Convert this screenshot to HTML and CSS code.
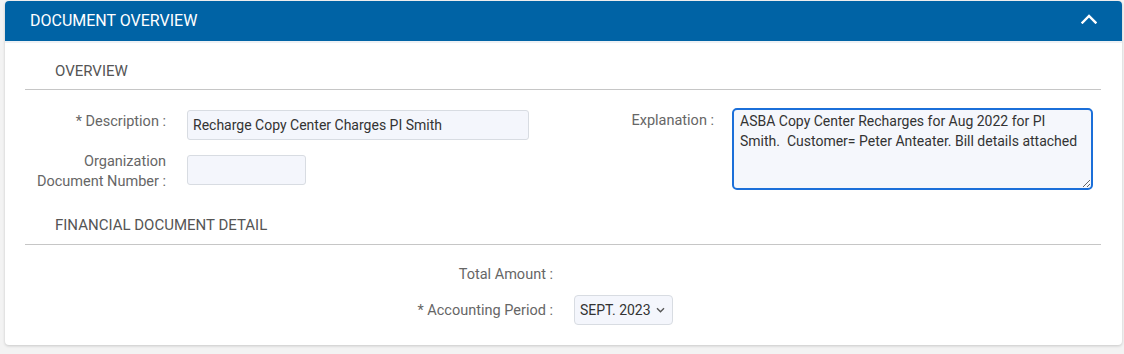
FILE: index.html
```html
<!DOCTYPE html>
<html lang="en">
<head>
<meta charset="utf-8">
<title>Document Overview</title>
<link rel="stylesheet" href="styles.css">
</head>
<body>
<section class="card">
  <header class="card-header">
    <h1 class="card-title">DOCUMENT OVERVIEW</h1>
    <svg class="chev-up" width="16" height="10" viewBox="0 0 16 10" aria-hidden="true">
      <path d="M1.5 8.5 L8 2 L14.5 8.5" fill="none" stroke="#fff" stroke-width="2.4" stroke-linecap="square"/>
    </svg>
  </header>
  <div class="card-body">
    <h2 class="section-title">OVERVIEW</h2>
    <div class="overview-grid">
      <div class="col-left">
        <div class="field field-top">
          <label class="field-label">* Description :</label>
          <input class="text-input input-wide" type="text" value="Recharge Copy Center Charges PI Smith">
        </div>
        <div class="field field-center">
          <label class="field-label label-two">Organization<br>Document Number :</label>
          <input class="text-input input-narrow" type="text" value="">
        </div>
      </div>
      <div class="col-right">
        <div class="field field-top">
          <label class="field-label label-expl">Explanation :</label>
          <textarea class="text-area">ASBA Copy Center Recharges for Aug 2022 for PI Smith.  Customer= Peter Anteater. Bill details attached</textarea>
        </div>
      </div>
    </div>
    <h2 class="section-title section-second">FINANCIAL DOCUMENT DETAIL</h2>
    <div class="fin-grid">
      <div class="field field-center fin-row-first">
        <span class="field-label label-fin">Total Amount :</span>
        <span class="value"></span>
      </div>
      <div class="field field-center fin-row">
        <span class="field-label label-fin">* Accounting Period :</span>
        <div class="fake-select">
          <span>SEPT. 2023</span>
          <svg width="9" height="6" viewBox="0 0 9 6" aria-hidden="true">
            <path d="M1 1.2 L4.5 4.7 L8 1.2" fill="none" stroke="#555" stroke-width="1.4"/>
          </svg>
        </div>
      </div>
    </div>
  </div>
</section>
</body>
</html>
```

FILE: styles.css
```css
* { box-sizing: border-box; }

html, body { height: 100%; }

body {
  margin: 0;
  padding: 1px 2px 0 5px;
  background: #f3f3f3;
  font-family: Roboto, "Liberation Sans", Arial, sans-serif;
  font-size: 14px;
  color: #666;
}

.card {
  background: #fff;
  border-radius: 4px;
  box-shadow: 0 1px 3px rgba(0, 0, 0, 0.18);
}

.card-header {
  height: 40px;
  background: #0063a5;
  border-radius: 4px 4px 0 0;
  padding: 0 25px;
  display: flex;
  align-items: center;
  justify-content: space-between;
}

.card-title {
  margin: 0;
  font-size: 16px;
  font-weight: 400;
  color: #fff;
  line-height: 20px;
}

.chev-up { display: block; margin-top: -4px; }

.card-body {
  border-top: 2px solid #eef1f5;
  padding: 0 21px 20px 20px;
}

.section-title {
  margin: 0;
  padding: 18px 0 8px 30px;
  font-size: 15px;
  font-weight: 400;
  line-height: 20px;
  color: #555;
  border-bottom: 1px solid #c6c6c6;
}

.section-second { margin-top: 7px; padding-bottom: 9px; }

.overview-grid {
  display: flex;
  padding-top: 18px;
}

.col-left {
  flex: 0 0 538px;
  padding-top: 2px;
}

.col-right { flex: 1; }

.field { display: flex; }
.field-top { align-items: flex-start; }
.field-center { align-items: center; }

.col-left .field-center { margin-top: 10px; }

.field-label {
  flex: 0 0 141px;
  margin-right: 21px;
  text-align: right;
  font-size: 14.5px;
  line-height: 20px;
  color: #666;
}

.field-top .field-label { padding-top: 2px; }

.field-center .field-label {
  padding-top: 1px;
  margin-bottom: -1px;
}

.field-center .label-two {
  padding-top: 2px;
  margin-bottom: -2px;
}

.field-top .label-expl {
  flex-basis: 151px;
  margin-right: 18px;
  padding-top: 3px;
}

.text-input {
  height: 30px;
  border: 1px solid #d8dce2;
  border-radius: 3px;
  background: #f4f6fc;
  padding: 0 5px;
  font-family: inherit;
  font-size: 14px;
  color: #333;
  outline: none;
}

.input-wide { width: 342px; }
.input-narrow { width: 119px; }

.text-area {
  width: 361px;
  height: 82px;
  border: 2px solid #1b6fd9;
  border-radius: 5px;
  background: #f5f7fc;
  padding: 1px 6px;
  font-family: inherit;
  font-size: 14px;
  line-height: 20px;
  color: #333;
  outline: none;
  resize: both;
}

.fin-row-first { margin-top: 14px; height: 30px; }
.fin-row { margin-top: 6px; }

.field-center .label-fin { flex-basis: 528px; }

.fake-select {
  width: 99px;
  height: 30px;
  border: 1px solid #d8dce2;
  border-radius: 4px;
  background: #f4f6fc;
  padding: 0 7px 0 5px;
  display: flex;
  align-items: center;
  justify-content: space-between;
  color: #333;
  font-size: 14px;
}
```
